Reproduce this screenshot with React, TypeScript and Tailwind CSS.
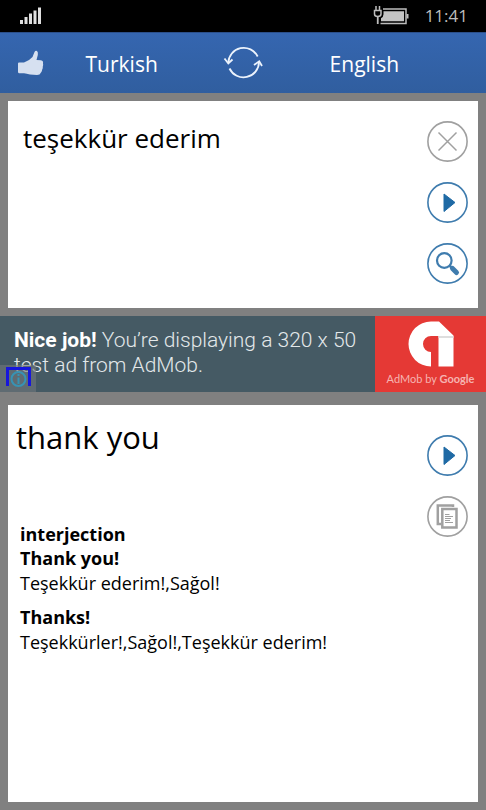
import React, { useState } from 'react';

interface RoundButtonProps {
  label: string;
  color: string;
  onClick?: () => void;
  children: React.ReactNode;
}

const RoundButton: React.FC<RoundButtonProps> = ({ label, color, onClick, children }) => (
  <button className="w-[41px] h-[41px] rounded-full" aria-label={label} onClick={onClick}>
    <svg viewBox="0 0 41 41" fill="none" stroke={color} aria-hidden="true">
      <circle cx="20.5" cy="20.5" r="19.6" strokeWidth="1.6" />
      {children}
    </svg>
  </button>
);

const PlayButton: React.FC<{ label: string }> = ({ label }) => (
  <RoundButton label={label} color="#3f7cae">
    <path d="M17 12 28 20.5 17 29.5Z" fill="#1f6aa5" stroke="#1f6aa5" strokeLinejoin="round" />
  </RoundButton>
);

const StatusBar: React.FC = () => (
  <div className="h-8 shrink-0 bg-black flex items-center justify-between pl-[19px] pr-[18px]">
    <svg width="24" height="18" viewBox="0 0 24 18" fill="#e0e0e0" role="img" aria-label="Signal">
      <path d="M1 13h3v4H1z M5.500 10h3v7h-3z M10 6.500h3V17h-3z M14.500 3.500h3V17h-3z M19 .5h3V17h-3z" />
    </svg>
    <div className="flex items-center gap-4">
      <svg width="36" height="20" viewBox="0 0 36 20" fill="none" stroke="#bdbdbd" role="img" aria-label="Battery charging">
        <path d="M3 0v4.500 M6.500 0v4.500" strokeWidth="1.500" />
        <path d="M1.500 4.500h6.500v3.500q0 2.500-3.250 2.500t-3.250-2.500z" strokeWidth="1.500" />
        <path d="M4.750 10.500v7.500" strokeWidth="1.800" />
        <path d="M10 3h23v14.500H7.500" strokeWidth="1.500" />
        <path d="M34.500 8v4.500" strokeWidth="2" />
        <path d="M10.500 5.300h20.500v10H8v-3q2.500-1.500 2.500-4z" fill="#c4c4c4" stroke="none" />
      </svg>
      <span className="text-[17px] leading-8 text-[#bdbdbd]">11:41</span>
    </div>
  </div>
);

const Header: React.FC<{ from: string; to: string; onSwap: () => void }> = ({ from, to, onSwap }) => (
  <header className="h-[61px] shrink-0 bg-linear-to-b from-[#3566b0] to-[#305e9f] border-t border-[#2b4f8a] flex items-center text-white text-[21px]">
    <button className="w-[61px] flex justify-center" aria-label="Rate">
      <svg width="28" height="28" viewBox="0 0 28 28" fill="#d6e0f0">
        <path d="M1 14.500Q1 13.500 2 13.500L7 13.500Q12.500 11.500 15.500 8L17.500 3Q18.500 1.200 20 2Q21.300 3 20.800 6L19.500 11L24 11.200Q26.500 11.800 26 14.500Q26.500 16 25.800 17.500Q26 19.500 25.200 20.500Q25 22.500 24 23.500Q23 26 20 26L13 25.500Q9.500 24.500 7 24.300L2 24.300Q1 24 1 23Z" />
      </svg>
    </button>
    <button className="flex-1 text-center pt-[3px]">{from}</button>
    <button className="flex-1 flex justify-center" aria-label="Swap languages" onClick={onSwap}>
      <svg width="40" height="36" viewBox="0 0 40 36" fill="none" stroke="#ecf3fc" strokeWidth="1.8">
        <path d="M5.300 18A15.500 15.500 0 0 1 34.700 11.500" />
        <path d="M36 17A15.500 15.500 0 0 1 6.500 23.500" />
        <path d="M1.500 13.500 5.300 18.500 9.500 14.500" />
        <path d="M31 20 36.200 16.300 39 21" />
      </svg>
    </button>
    <button className="flex-1 text-center pt-[3px]">{to}</button>
    <div className="w-[61px]" />
  </header>
);

const AdBanner: React.FC = () => (
  <a href="#ad" className="relative h-[76px] shrink-0 mt-2 flex bg-[#455a64] font-[Roboto,sans-serif]">
    <p className="flex-1 pl-[14px] pt-3 text-[21px] leading-[25px] font-light text-[#e3e8ea]">
      <b className="font-bold text-white">Nice job!</b> You’re displaying a 320 x 50<br />
      test ad from AdMob.
    </p>
    <div className="w-[111px] bg-[#e53935] flex flex-col items-center pt-[5px]">
      <svg width="46" height="46" viewBox="0 0 46 46" aria-hidden="true">
        <path d="M31 .5H23A22.500 22.500 0 0 0 23 45.500V31A8 8 0 0 1 23 15H30.500V45.500H45.500V14.500Z" fill="#fff" />
        <path d="M30.500 15H45.500V17H30.500Z" fill="#dedede" />
      </svg>
      <span className="font-[Lato,sans-serif] text-[11px] leading-6 text-[#f6b3b1] whitespace-nowrap">
        AdMob by <b className="font-bold">Google</b>
      </span>
    </div>
    <span className="absolute left-0 bottom-0 w-9 h-[27px] bg-[#71777b]/60 pl-[6px] pt-[2px]">
      <svg width="25" height="20" viewBox="0 0 25 20" fill="none" aria-hidden="true">
        <path d="M1.500 19V1M23.500 19V1" stroke="#1616dc" strokeWidth="3" />
        <path d="M0 1.500H25" stroke="#1616dc" strokeWidth="3" />
        <circle cx="12.500" cy="12" r="7" stroke="#3793b4" strokeWidth="2" />
        <path d="M12.500 7v2M12.500 10.500v6.500" stroke="#3793b4" strokeWidth="2" />
      </svg>
    </span>
  </a>
);

const entries = [
  { word: 'Thank you!', meaning: 'Teşekkür ederim!,Sağol!' },
  { word: 'Thanks!', meaning: 'Teşekkürler!,Sağol!,Teşekkür ederim!' },
];

const App: React.FC = () => {
  const [text, setText] = useState('teşekkür ederim');
  const [langs, setLangs] = useState(['Turkish', 'English']);

  return (
    <div className="min-h-screen flex flex-col bg-[#808080] font-['Open_Sans','Noto_Sans',sans-serif] text-black">
      <StatusBar />
      <Header from={langs[0]} to={langs[1]} onSwap={() => setLangs([langs[1], langs[0]])} />

      <section className="mx-2 mt-2 h-[207px] shrink-0 bg-white flex pr-[10px]">
        <textarea
          aria-label="Text to translate"
          value={text}
          onChange={e => setText(e.target.value)}
          className="flex-1 min-w-0 resize-none outline-none pl-[15px] pt-[17px] text-[26px] leading-10"
        />
        <div className="flex flex-col gap-5 pt-5">
          <RoundButton label="Clear" color="#a0a0a0" onClick={() => setText('')}>
            <path d="M11.500 11.500 29.500 29.500M29.500 11.500 11.500 29.500" strokeWidth="1.500" />
          </RoundButton>
          <PlayButton label="Play source" />
          <RoundButton label="Search" color="#3f7cae">
            <circle cx="17.300" cy="17.500" r="7.300" strokeWidth="2.200" />
            <path d="M22.500 22.500 26 26" strokeWidth="2.500" />
            <path d="M25.500 25.500 29.500 29.500" strokeWidth="5" strokeLinecap="round" />
          </RoundButton>
        </div>
      </section>

      <AdBanner />

      <section className="mx-2 mt-[13px] mb-2 flex-1 bg-white flex pr-[10px]">
        <div className="flex-1 min-w-0">
          <h1 className="pl-2 pt-3 text-[31px] leading-10">thank you</h1>
          <div className="pl-3 pt-[65px] text-lg leading-6">
            <p className="font-bold">interjection</p>
            <dl>
              {entries.map(e => (
                <div key={e.word} className="mb-[9px]">
                  <dt className="font-bold leading-[25px]">{e.word}</dt>
                  <dd className="leading-[25px]">{e.meaning}</dd>
                </div>
              ))}
            </dl>
          </div>
        </div>
        <div className="flex flex-col gap-5 pt-[30px]">
          <PlayButton label="Play translation" />
          <RoundButton label="Copy" color="#a0a0a0">
            <path d="M26 11V9.500H10.800V28H14" strokeWidth="2.500" />
            <path d="M15.300 13H29.500V31.500H15.300Z" strokeWidth="2.500" />
            <path d="M18 18.500h4.500M18 20.500h8M18 22.500h6M18 24.500h5M18 26.500h8" strokeWidth="1" />
          </RoundButton>
        </div>
      </section>
    </div>
  );
};

export default App;
